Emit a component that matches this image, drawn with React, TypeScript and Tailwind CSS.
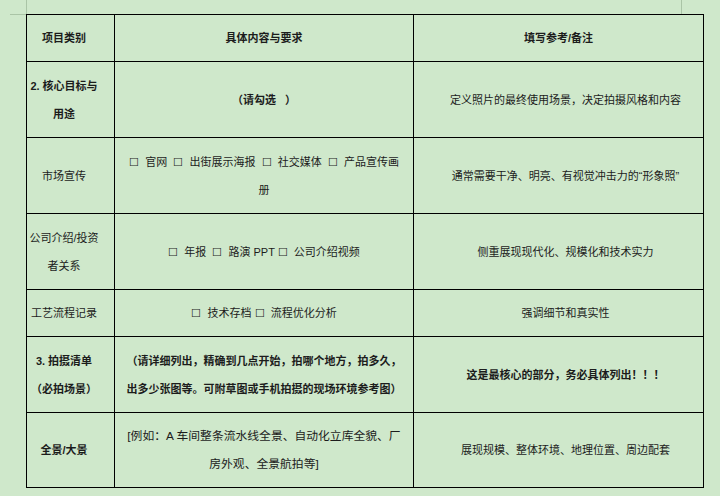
const font = { fontFamily: '"Liberation Sans", "Noto Sans CJK SC", sans-serif' }

type Row = {
  h: string
  cat: string[]
  content: string[]
  note: string[]
  catBold?: boolean
  contentBold?: boolean
  noteBold?: boolean
  header?: boolean
  big?: boolean
}

const rows: Row[] = [
  { h: 'h-[47px]', cat: ['项目类别'], content: ['具体内容与要求'], note: ['填写参考/备注'], header: true, catBold: true, contentBold: true, noteBold: true },
  { h: 'h-[76px]', cat: ['2. 核心目标与', '用途'], content: ['（请勾选\u00a0\u00a0\u00a0）'], note: ['定义照片的最终使用场景，决定拍摄风格和内容'], catBold: true, contentBold: true },
  { h: 'h-[76px]', cat: ['市场宣传'], content: ['☐\u00a0 官网\u00a0 ☐\u00a0 出街展示海报\u00a0 ☐\u00a0 社交媒体\u00a0 ☐\u00a0 产品宣传画', '册'], note: ['通常需要干净、明亮、有视觉冲击力的“形象照”'] },
  { h: 'h-[76px]', cat: ['公司介绍/投资', '者关系'], content: ['☐\u00a0 年报\u00a0 ☐\u00a0 路演 PPT ☐\u00a0 公司介绍视频'], note: ['侧重展现现代化、规模化和技术实力'] },
  { h: 'h-[47px]', cat: ['工艺流程记录'], content: ['☐\u00a0 技术存档 ☐\u00a0 流程优化分析'], note: ['强调细节和真实性'] },
  { h: 'h-[76px]', cat: ['3. 拍摄清单', '（必拍场景）'], content: ['（请详细列出，精确到几点开始，拍哪个地方，拍多久，', '出多少张图等。可附草图或手机拍摄的现场环境参考图）'], note: ['这是最核心的部分，务必具体列出！！！'], catBold: true, contentBold: true, noteBold: true },
  { h: 'h-[75px]', cat: ['全景/大景'], content: ['[例如：A 车间整条流水线全景、自动化立库全貌、厂', '房外观、全景航拍等]'], note: ['展现规模、整体环境、地理位置、周边配套'], catBold: true, big: true },
]

function Lines({ lines }: { lines: string[] }) {
  return (
    <>
      {lines.map((l, i) => (
        <span key={i} className="block whitespace-nowrap">
          {l}
        </span>
      ))}
    </>
  )
}

export default function App() {
  return (
    <div className="w-[720px] h-[496px] bg-[#cfe8cb] text-[#1c1c1c] overflow-hidden" style={font}>
      <div className="relative pt-[14px] pl-[26px]">
        {/* page corner marks */}
        <div className="absolute left-[26px] top-0 h-[14px] w-px bg-[#aac4a6]" />
        <div className="absolute left-[10px] top-[14px] w-[16px] h-px bg-[#aac4a6]" />
        <div className="absolute left-[681px] top-0 h-[14px] w-px bg-[#aac4a6]" />
        <table className="table-fixed border-collapse w-[677px] text-[11px] leading-[28px]">
          <colgroup>
            <col className="w-[88px]" />
            <col className="w-[299px]" />
            <col className="w-[290px]" />
          </colgroup>
          <tbody>
            {rows.map((r, i) => (
              <tr key={i} className={r.h}>
                <td className={`border border-black text-center align-middle p-0 pl-px pr-[14px] ${r.catBold ? 'font-bold' : ''}`}>
                  <Lines lines={r.cat} />
                </td>
                <td className={`border border-black text-center align-middle px-2 py-0 ${r.big ? 'text-[11.8px]' : ''} ${r.contentBold ? 'font-bold' : ''}`}>
                  <Lines lines={r.content} />
                </td>
                <td className={`border border-black text-center align-middle py-0 ${r.header ? 'px-2' : 'pl-[22px] pr-[8px]'} ${r.noteBold ? 'font-bold' : ''}`}>
                  <Lines lines={r.note} />
                </td>
              </tr>
            ))}
          </tbody>
        </table>
      </div>
    </div>
  )
}
